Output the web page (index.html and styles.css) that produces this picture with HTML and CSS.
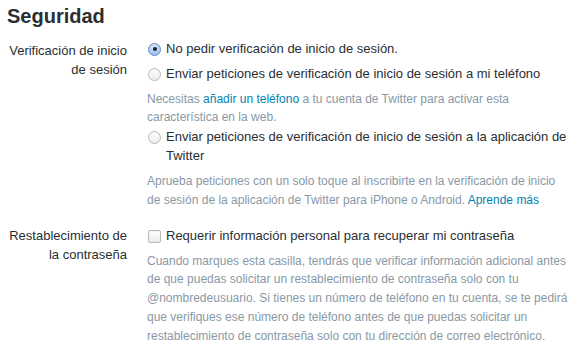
FILE: index.html
```html
<!DOCTYPE html>
<html lang="es">
<head>
<meta charset="utf-8">
<link rel="stylesheet" href="styles.css">
</head>
<body>
<h2 class="title">Seguridad</h2>
<div class="row">
  <div class="label first">Verificación de inicio de sesión</div>
  <div class="controls">
    <label class="option"><span class="radio checked"></span><span>No pedir verificación de inicio de sesión.</span></label>
    <label class="option"><span class="radio"></span><span>Enviar peticiones de verificación de inicio de sesión a mi teléfono</span></label>
    <p class="help">Necesitas <a href="#">añadir un teléfono</a> a tu cuenta de Twitter para activar esta característica en la web.</p>
    <label class="option"><span class="radio"></span><span>Enviar peticiones de verificación de inicio de sesión a la aplicación de Twitter</span></label>
    <p class="help narrow">Aprueba peticiones con un solo toque al inscribirte en la verificación de inicio de sesión de la aplicación de Twitter para iPhone o Android. <a href="#">Aprende más</a></p>
  </div>
</div>
<div class="row">
  <div class="label">Restablecimiento de la contraseña</div>
  <div class="controls">
    <label class="option"><span class="check"></span><span>Requerir información personal para recuperar mi contraseña</span></label>
    <p class="help">Cuando marques esta casilla, tendrás que verificar información adicional antes de que puedas solicitar un restablecimiento de contraseña solo con tu @nombredeusuario. Si tienes un número de teléfono en tu cuenta, se te pedirá que verifiques ese número de teléfono antes de que puedas solicitar un restablecimiento de contraseña solo con tu dirección de correo electrónico.</p>
  </div>
</div>
</body>
</html>
```

FILE: styles.css
```css
body {
  margin: 0;
  padding: 0 9px 0 7px;
  font-family: "Liberation Sans", Arial, sans-serif;
  color: #292f33;
  background: #fff;
  font-size: 13px;
}
.title {
  margin: 3px 0 0;
  font-size: 20px;
  font-weight: bold;
  color: #292f33;
  line-height: 26px;
  height: 35.5px;
  box-sizing: border-box;
}
.row {
  display: grid;
  grid-template-columns: 120px 1fr;
  column-gap: 20px;
  margin-bottom: 16px;
}
.label {
  text-align: right;
  line-height: 19px;
}
.label.first {
  padding-top: 2px;
}
.controls {
  display: flex;
  flex-direction: column;
}
.option {
  display: flex;
  align-items: flex-start;
  gap: 5px;
  line-height: 19px;
  color: #292f33;
}
.option + .option {
  margin-top: 6px;
}
.radio, .check {
  flex: none;
  width: 11px;
  height: 11px;
  margin: 4px 0 0 1px;
  border: 1px solid #b9b9b9;
  background: linear-gradient(#ffffff, #ebebeb);
  box-shadow: inset 0 1px 1px rgba(0,0,0,0.04);
  position: relative;
}
.radio { border-radius: 50%; }
.check { border-radius: 2px; }
.radio.checked {
  border-color: #5f86bf;
  background: linear-gradient(#dbe8fb, #9dbfeb);
}
.radio.checked::after {
  content: "";
  position: absolute;
  left: 3.5px;
  top: 3.5px;
  width: 4px;
  height: 4px;
  border-radius: 50%;
  background: #17253a;
}
.help {
  margin: 7px 0 0;
  font-size: 12px;
  line-height: 18.75px;
  color: #8899a6;
}
.help.narrow {
  padding-right: 12px;
}
.help a {
  color: #0084b4;
  text-decoration: none;
}
```
